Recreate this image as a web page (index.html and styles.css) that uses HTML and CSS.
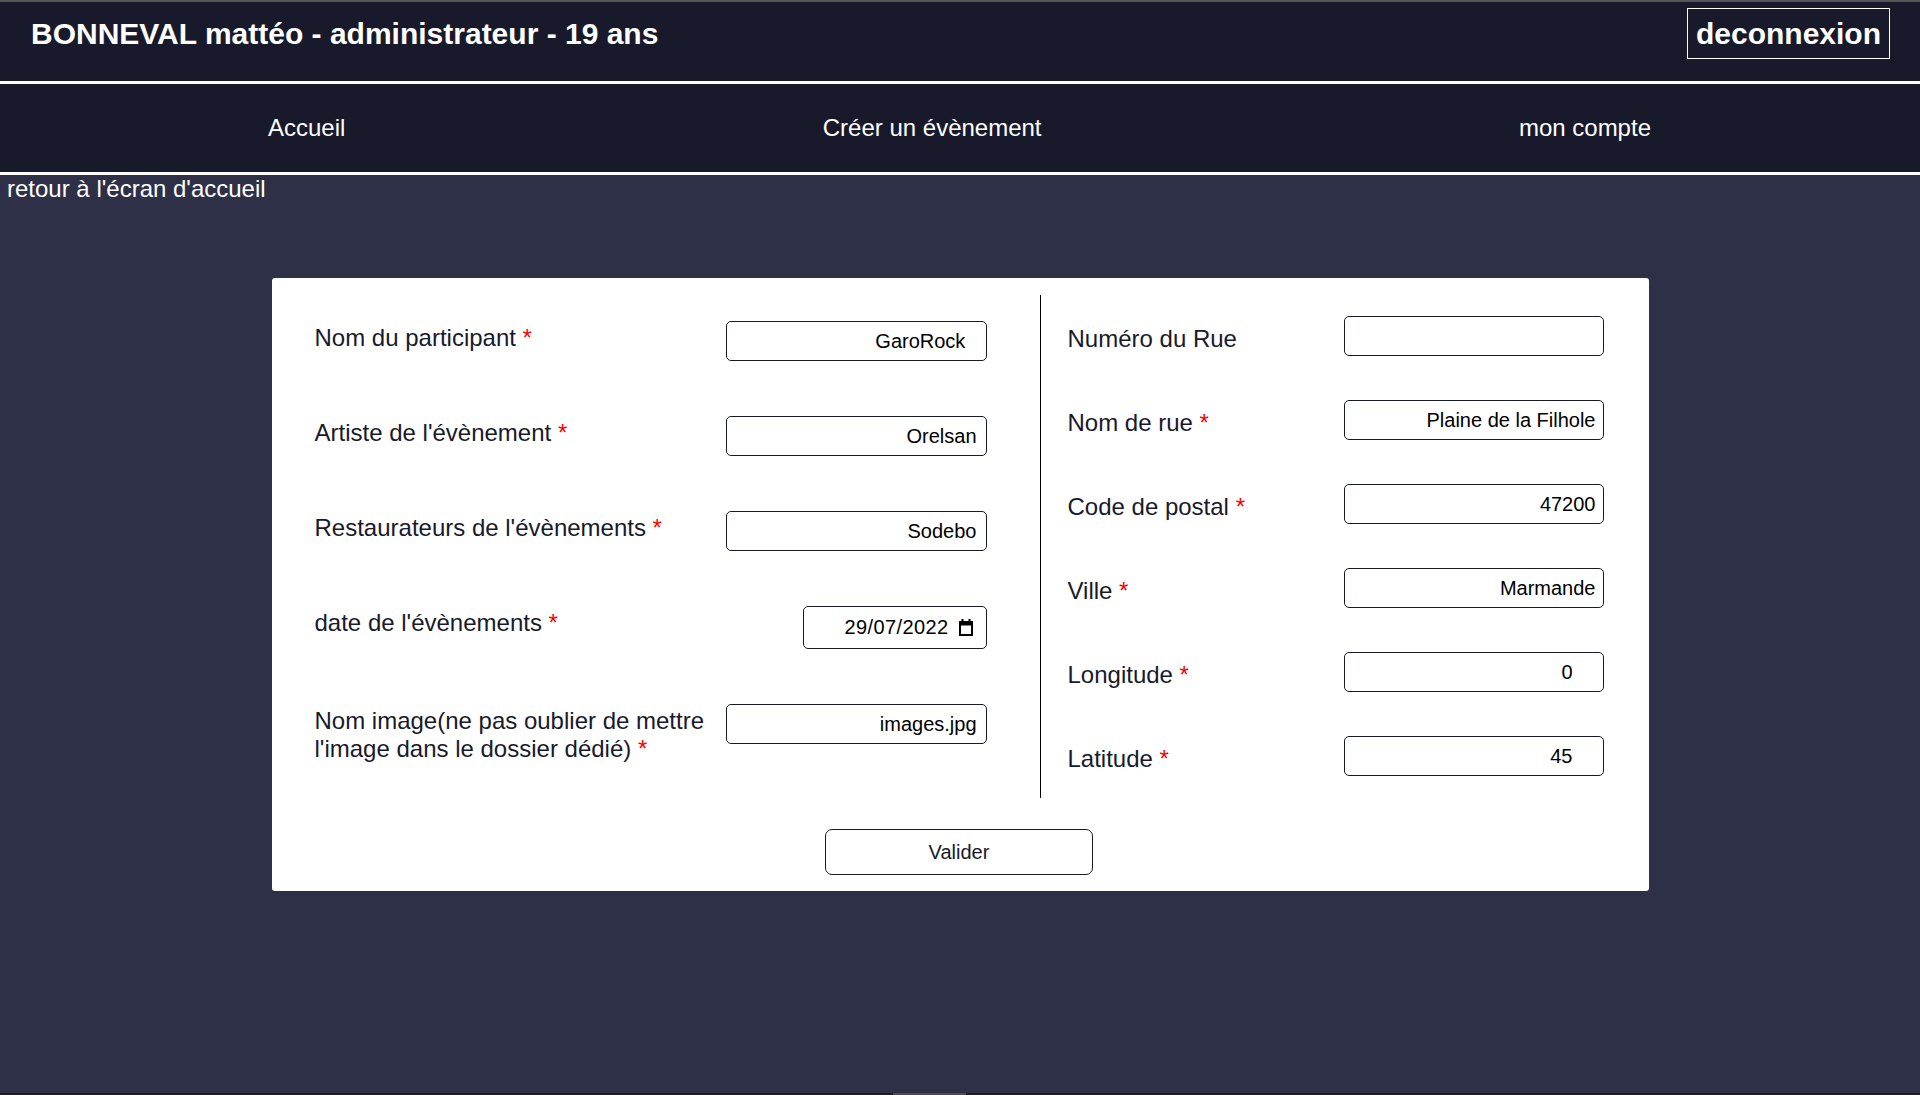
FILE: index.html
```html
<!DOCTYPE html>
<html lang="fr">
<head>
<meta charset="utf-8">
<title>Créer un évènement</title>
<link rel="stylesheet" href="styles.css">
</head>
<body>
<header class="topbar">
  <div class="topbar-row">
    <h1 class="user">BONNEVAL mattéo - administrateur - 19 ans</h1>
    <a class="logout" href="#">deconnexion</a>
  </div>
</header>
<nav class="nav">
  <a href="#">Accueil</a>
  <a href="#">Créer un évènement</a>
  <a href="#">mon compte</a>
</nav>
<a class="back" href="#">retour à l'écran d'accueil</a>

<form class="card">
  <div class="cols">
    <div class="col-left">
      <div class="row">
        <label class="lbl">Nom du participant <span class="req">*</span></label>
        <input class="field" type="text" value="GaroRock  ">
      </div>
      <div class="row">
        <label class="lbl">Artiste de l'évènement <span class="req">*</span></label>
        <input class="field" type="text" value="Orelsan">
      </div>
      <div class="row">
        <label class="lbl">Restaurateurs de l'évènements <span class="req">*</span></label>
        <input class="field" type="text" value="Sodebo">
      </div>
      <div class="row">
        <label class="lbl">date de l'évènements <span class="req">*</span></label>
        <div class="date">
          <span class="date-text">29/07/2022</span>
          <svg class="cal" width="16" height="17" viewBox="0 0 16 17" aria-hidden="true">
            <rect x="3.5" y="0" width="2" height="3" fill="#000"/>
            <rect x="10.5" y="0" width="2" height="3" fill="#000"/>
            <path d="M1 2h14v15H1z M3 6.5v8.5h10V6.5z" fill="#000" fill-rule="evenodd"/>
          </svg>
        </div>
      </div>
      <div class="row">
        <label class="lbl">Nom image(ne pas oublier de mettre l'image dans le dossier dédié) <span class="req">*</span></label>
        <input class="field" type="text" value="images.jpg">
      </div>
    </div>
    <div class="col-right">
      <div class="row-r">
        <label class="lbl-r">Numéro du Rue</label>
        <input class="field-r" type="text" value="">
      </div>
      <div class="row-r">
        <label class="lbl-r">Nom de rue <span class="req">*</span></label>
        <input class="field-r" type="text" value="Plaine de la Filhole">
      </div>
      <div class="row-r">
        <label class="lbl-r">Code de postal <span class="req">*</span></label>
        <input class="field-r" type="text" value="47200">
      </div>
      <div class="row-r">
        <label class="lbl-r">Ville <span class="req">*</span></label>
        <input class="field-r" type="text" value="Marmande">
      </div>
      <div class="row-r">
        <label class="lbl-r">Longitude <span class="req">*</span></label>
        <input class="field-r num" type="text" value="0">
      </div>
      <div class="row-r">
        <label class="lbl-r">Latitude <span class="req">*</span></label>
        <input class="field-r num" type="text" value="45">
      </div>
    </div>
  </div>
  <div class="actions">
    <button class="submit" type="button">Valider</button>
  </div>
</form>

<div class="bottom-strip"><span class="bottom-thumb"></span></div>
</body>
</html>
```

FILE: styles.css
```css
* { box-sizing: border-box; }

html, body {
  margin: 0;
  padding: 0;
}

body {
  background: #2e3047;
  font-family: "Liberation Sans", Arial, sans-serif;
  font-size: 24px;
  color: #ffffff;
  min-height: 1095px;
}

.topbar {
  background: #181a2b;
  border-top: 2px solid #55565c;
  border-bottom: 3px solid #ffffff;
  height: 84px;
  padding: 6px 30px 0 30px;
}

.topbar-row {
  height: 51px;
  display: flex;
  align-items: center;
  justify-content: space-between;
}

.user {
  margin: 0;
  font-size: 30px;
  font-weight: bold;
  line-height: 34px;
  color: #ffffff;
  padding-left: 1px;
}

.logout {
  display: block;
  height: 51px;
  border: 1px solid #ffffff;
  padding: 0 8px;
  font-size: 30px;
  font-weight: bold;
  line-height: 49px;
  color: #ffffff;
  text-decoration: none;
}

.nav {
  background: #181a2b;
  height: 91px;
  border-bottom: 3px solid #ffffff;
  display: flex;
  align-items: center;
  justify-content: space-between;
  padding: 0 269px 0 268px;
}

.nav a {
  color: #ffffff;
  text-decoration: none;
  font-size: 24px;
  line-height: 28px;
}

.back {
  display: block;
  width: max-content;
  margin-left: 7px;
  line-height: 28px;
  color: #ffffff;
  text-decoration: none;
}

.card {
  width: 1377px;
  margin: 75px auto 0 auto;
  background: #ffffff;
  border-radius: 3px;
  padding: 17px 45px 16px 43px;
  color: #181a2b;
}

.cols {
  display: flex;
  height: 503px;
}

.col-left {
  width: 672px;
  margin-right: 53px;
  padding-top: 26px;
}

.row {
  display: flex;
  align-items: flex-start;
  justify-content: space-between;
  margin-bottom: 55px;
}

.lbl {
  width: 400px;
  margin-top: 3px;
  line-height: 28px;
  color: #181a2b;
}

.req {
  color: #ff0000;
}

.field, .field-r {
  height: 40px;
  width: 261px;
  border: 1px solid #181a2b;
  border-radius: 5px;
  background: #ffffff;
  font-family: "Liberation Sans", Arial, sans-serif;
  font-size: 20px;
  color: #000000;
  text-align: right;
  padding: 0 9px 0 8px;
  outline: none;
}

.date {
  height: 43px;
  width: 184px;
  border: 1px solid #181a2b;
  border-radius: 5px;
  display: flex;
  align-items: center;
  justify-content: flex-end;
  padding-right: 12px;
  font-size: 20px;
  color: #000000;
}

.date-text {
  letter-spacing: 0.4px;
}

.cal {
  margin-left: 9px;
  margin-top: -1px;
}

.col-right {
  flex: 1;
  border-left: 1px solid #000000;
  padding-left: 27px;
  padding-top: 21px;
}

.row-r {
  display: flex;
  align-items: flex-start;
  justify-content: space-between;
  margin-bottom: 44px;
}

.lbl-r {
  margin-top: 9px;
  line-height: 28px;
  color: #181a2b;
}

.field-r {
  width: 260px;
  padding-right: 7px;
}

.field-r.num {
  padding-right: 30px;
}

.actions {
  display: flex;
  justify-content: center;
  padding-top: 31px;
}

.submit {
  width: 268px;
  height: 46px;
  background: #ffffff;
  border: 1px solid #181a2b;
  border-radius: 7px;
  font-family: "Liberation Sans", Arial, sans-serif;
  font-size: 20px;
  color: #181a2b;
}

.bottom-strip {
  position: fixed;
  left: 0;
  right: 0;
  bottom: 0;
  height: 2px;
  background: #1e1d1b;
}

.bottom-thumb {
  position: absolute;
  left: 893px;
  width: 73px;
  top: 0;
  bottom: 0;
  background: #4d4d4f;
}
```
